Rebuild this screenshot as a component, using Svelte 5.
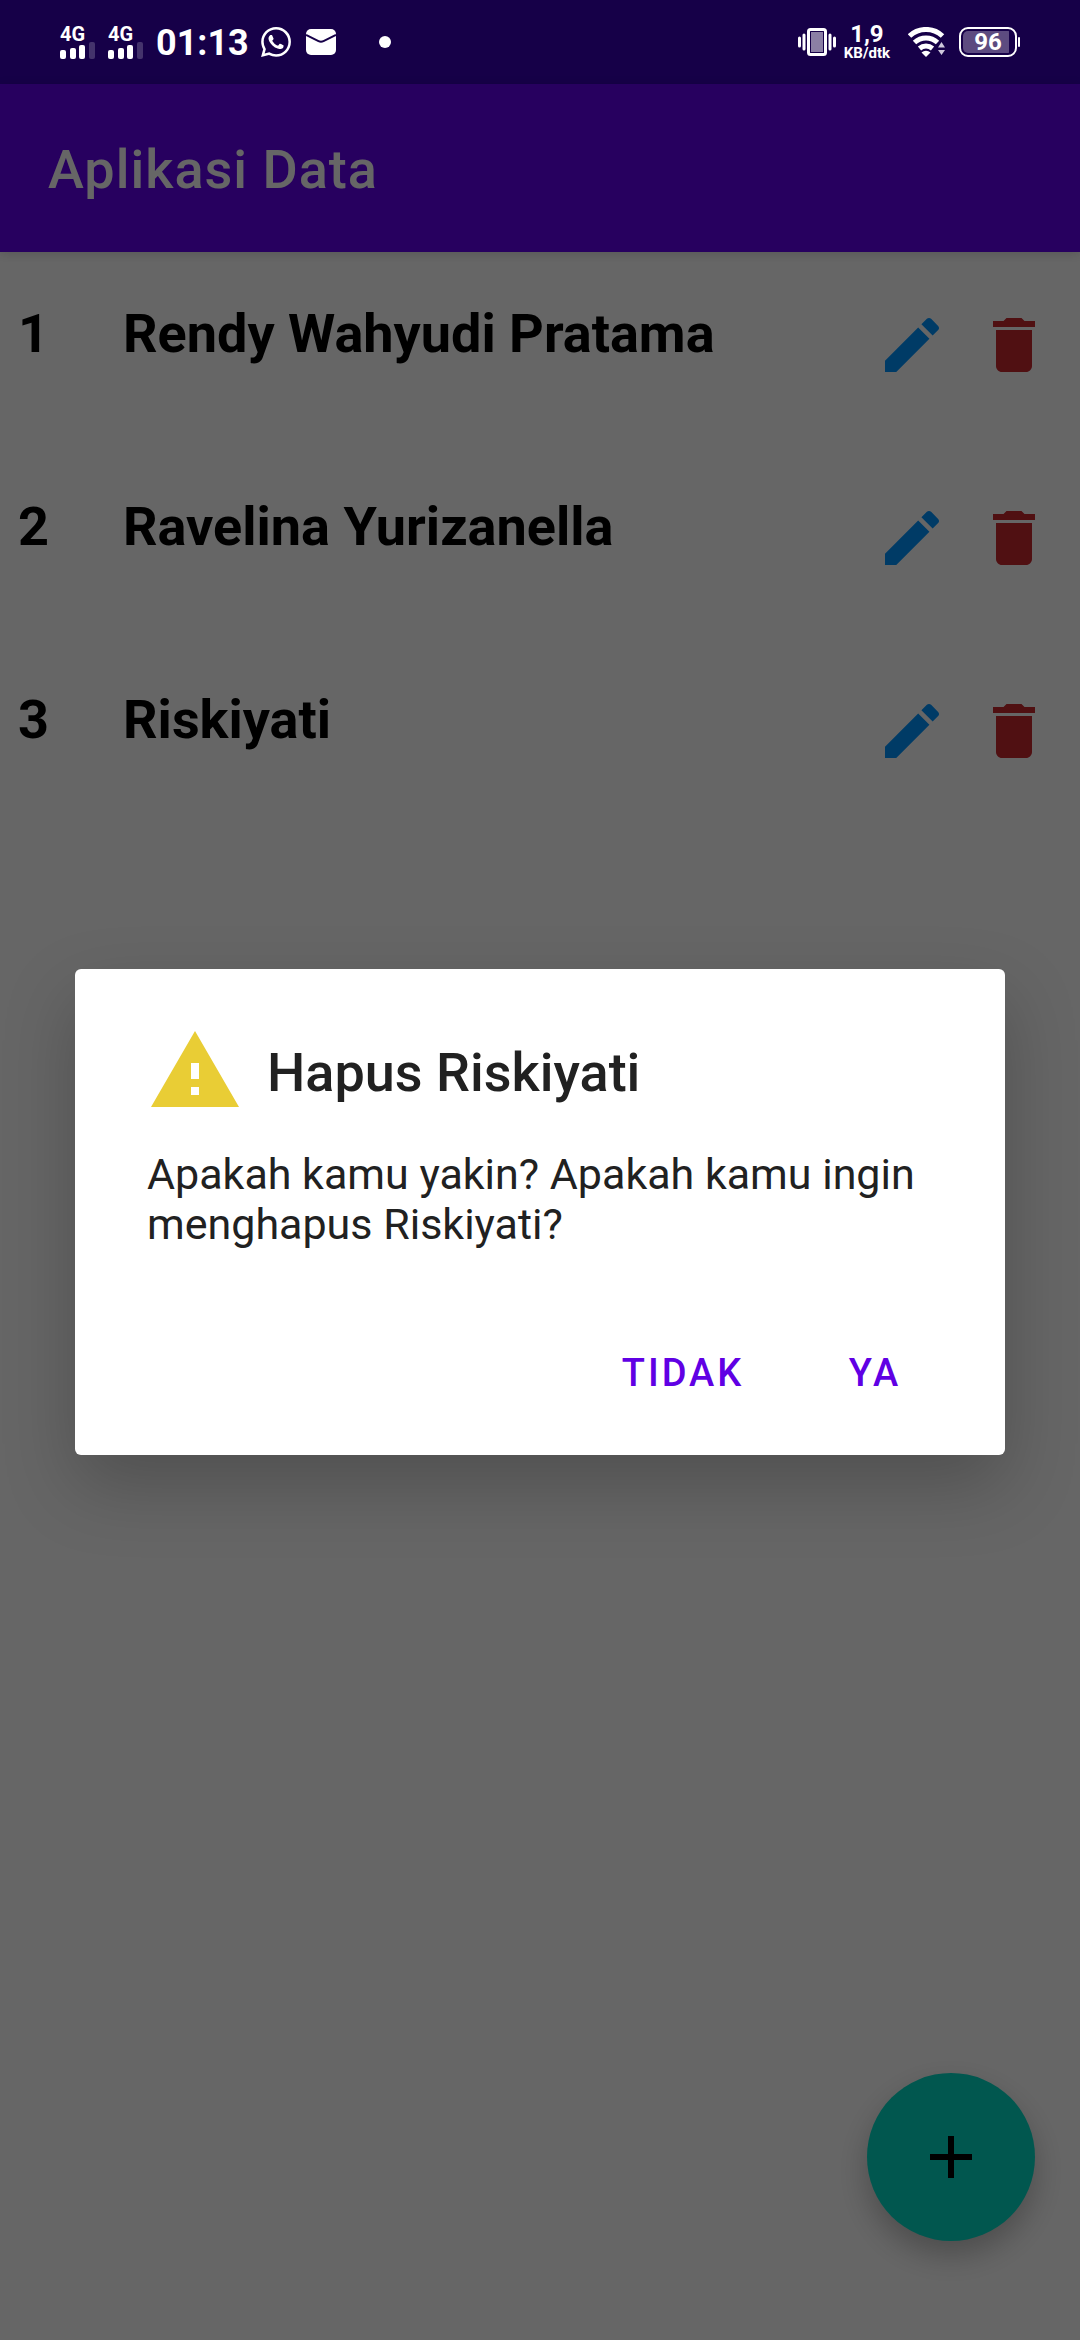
<script>
  let people = $state([
    { id: 1, name: 'Rendy Wahyudi Pratama' },
    { id: 2, name: 'Ravelina Yurizanella' },
    { id: 3, name: 'Riskiyati' }
  ]);
  let selected = $state({ id: 3, name: 'Riskiyati' });

  function askDelete(person) {
    selected = person;
  }

  function cancel() {
    selected = null;
  }

  function confirmDelete() {
    people = people.filter((p) => p.id !== selected.id);
    selected = null;
  }
</script>

{#snippet signal()}
  <div class="signal">
    <span>4G</span>
    <svg width="36" height="17" viewBox="0 0 36 17" fill="#fff" aria-hidden="true">
      <rect x="0" y="8" width="6" height="9" rx="2" />
      <rect x="10" y="6" width="6" height="11" rx="2" />
      <rect x="19" y="3" width="6" height="14" rx="2" />
      <rect x="29" y="0" width="6" height="17" rx="2" opacity="0.2" />
    </svg>
  </div>
{/snippet}

<div class="screen">
  <div class="status">
    <div class="group left">
      {@render signal()}
      {@render signal()}
      <span class="clock">01:13</span>
      <svg class="whatsapp" width="30" height="30" viewBox="0 0 24 24" fill="#fff" aria-hidden="true">
        <path d="M17.472 14.382c-.297-.149-1.758-.867-2.03-.967-.273-.099-.471-.148-.67.15-.197.297-.767.966-.94 1.164-.173.199-.347.223-.644.075-.297-.15-1.255-.463-2.39-1.475-.883-.788-1.48-1.761-1.653-2.059-.173-.297-.018-.458.13-.606.134-.133.298-.347.446-.52.149-.174.198-.298.298-.497.099-.198.05-.371-.025-.52-.075-.149-.669-1.612-.916-2.207-.242-.579-.487-.5-.669-.51-.173-.008-.371-.01-.57-.01-.198 0-.52.074-.792.372-.272.297-1.04 1.016-1.04 2.479 0 1.462 1.065 2.875 1.213 3.074.149.198 2.096 3.2 5.077 4.487.709.306 1.262.489 1.694.625.712.227 1.36.195 1.871.118.571-.085 1.758-.719 2.006-1.413.248-.694.248-1.289.173-1.413-.074-.124-.272-.198-.57-.347m-5.421 7.403h-.004a9.87 9.87 0 01-5.031-1.378l-.361-.214-3.741.982.998-3.648-.235-.374a9.86 9.86 0 01-1.51-5.26c.001-5.45 4.436-9.884 9.888-9.884 2.64 0 5.122 1.03 6.988 2.898a9.825 9.825 0 012.893 6.994c-.003 5.45-4.437 9.884-9.885 9.884m8.413-18.297A11.815 11.815 0 0012.05 0C5.495 0 .16 5.335.157 11.892c0 2.096.547 4.142 1.588 5.945L.057 24l6.305-1.654a11.882 11.882 0 005.683 1.448h.005c6.554 0 11.89-5.335 11.893-11.893a11.821 11.821 0 00-3.48-8.413z" />
      </svg>
      <svg class="mail" width="30" height="26" viewBox="0 0 30 26" aria-hidden="true">
        <rect width="30" height="26" rx="5" fill="#fff" />
        <path d="M0 6l12.500 6.200q2.500 1.200 5 0L30 6" fill="none" stroke="#160048" stroke-width="2" />
      </svg>
      <span class="dot"></span>
    </div>
    <div class="group right">
      <svg width="38" height="30" viewBox="0 0 38 30" aria-hidden="true">
        <rect x="10.500" y="2.500" width="17" height="25" rx="2" fill="none" stroke="#fff" stroke-width="3" />
        <rect x="13" y="5" width="12" height="20" fill="#8b7fa4" />
        <path d="M1.500 11v8M6 8v14M32 8v14M36.500 11v8" stroke="#fff" stroke-width="3" stroke-linecap="round" />
      </svg>
      <div class="speed">
        <span class="rate">1,9</span>
        <span class="unit">KB/dtk</span>
      </div>
      <svg class="wifi" width="37" height="30" viewBox="0 0 37 30" aria-hidden="true">
        <g fill="none" stroke="#fff" stroke-width="5">
          <path d="M1.500 9a24 24 0 0 1 33 0" />
          <path d="M6.500 15.500a17 17 0 0 1 23 0" />
          <path d="M11.500 21.500a10 10 0 0 1 13 0" />
        </g>
        <path d="M13.500 25.500a7 7 0 0 1 9 0L18 30z" fill="#fff" />
        <path d="M33 12.500l5 7.500v3l-5 7-6-7v-3z" fill="#160048" />
        <path d="M33.500 15l3.500 5.500h-7zM33.500 28l3.500-5h-7z" fill="#cfc8dc" />
      </svg>
      <div class="battery">
        <div class="cell"><span>96</span></div>
        <i></i>
      </div>
    </div>
  </div>

  <header>
    <h1>Aplikasi Data</h1>
  </header>

  <main>
    <ul>
      {#each people as person (person.id)}
        <li>
          <span class="number">{person.id}</span>
          <span class="name">{person.name}</span>
          <div class="actions">
            <button class="icon edit" aria-label="Ubah {person.name}">
              <svg viewBox="0 0 24 24" fill="currentColor" aria-hidden="true">
                <path d="M3 17.250V21h3.750L17.810 9.940l-3.750-3.750L3 17.250zM20.710 7.040c.390-.390.390-1.020 0-1.410l-2.340-2.340c-.390-.390-1.020-.390-1.410 0l-1.830 1.830 3.750 3.750 1.830-1.830z" />
              </svg>
            </button>
            <button class="icon remove" aria-label="Hapus {person.name}" onclick={() => askDelete(person)}>
              <svg viewBox="0 0 24 24" fill="currentColor" aria-hidden="true">
                <path d="M6 19c0 1.100.900 2 2 2h8c1.100 0 2-.900 2-2V7H6v12zM19 4h-3.500l-1-1h-5l-1 1H5v2h14V4z" />
              </svg>
            </button>
          </div>
        </li>
      {/each}
    </ul>
  </main>

  <button class="fab" aria-label="Tambah data">
    <svg viewBox="0 0 24 24" fill="#000" aria-hidden="true">
      <path d="M19 13h-6v6h-2v-6H5v-2h6V5h2v6h6v2z" />
    </svg>
  </button>

  {#if selected}
    <div class="scrim">
      <div class="dialog" role="alertdialog" aria-modal="true" aria-labelledby="dialog-title" aria-describedby="dialog-text">
        <div class="heading">
          <svg viewBox="0 0 24 24" fill="#e9cd35" aria-hidden="true">
            <path d="M1 21h22L12 2 1 21zm12-3h-2v-2h2v2zm0-4h-2v-4h2v4z" />
          </svg>
          <h2 id="dialog-title">Hapus {selected.name}</h2>
        </div>
        <p id="dialog-text">Apakah kamu yakin? Apakah kamu ingin menghapus {selected.name}?</p>
        <div class="choices">
          <button onclick={cancel}>TIDAK</button>
          <button onclick={confirmDelete}>YA</button>
        </div>
      </div>
    </div>
  {/if}
</div>

<style>
  :global(body) {
    margin: 0;
    background: #fff;
  }

  .screen {
    position: relative;
    min-height: 100vh;
    background: #fff;
    color: #000;
    font-family: Roboto, 'Noto Sans', sans-serif;
  }

  button {
    padding: 0;
    border: 0;
    background: none;
    font: inherit;
    cursor: pointer;
  }

  svg {
    display: block;
    flex: none;
  }

  /* Status bar */
  .status {
    display: flex;
    justify-content: space-between;
    align-items: center;
    box-sizing: border-box;
    height: 84px;
    padding: 0 60px;
    background: #160048;
    color: #fff;
    font-weight: 700;
  }

  .group {
    display: flex;
    align-items: center;
  }

  .signal {
    display: flex;
    flex-direction: column;
    width: 36px;
    margin-right: 12px;
    font-size: 20px;
    line-height: 16px;
  }

  .clock {
    margin-right: 12px;
    padding-top: 2px;
    font-size: 36px;
    line-height: 42px;
  }

  .mail {
    margin-left: 15px;
  }

  .dot {
    width: 12px;
    height: 12px;
    margin-left: 43px;
    border-radius: 50%;
    background: #fff;
  }

  .speed {
    display: flex;
    flex-direction: column;
    align-items: center;
    margin: 0 18px 0 8px;
  }

  .rate {
    font-size: 24px;
    line-height: 22px;
  }

  .unit {
    font-size: 15px;
    line-height: 16px;
  }

  .battery {
    display: flex;
    align-items: center;
    gap: 1px;
    margin-left: 14px;
  }

  .cell {
    box-sizing: border-box;
    width: 58px;
    height: 30px;
    padding: 2px;
    border: 2px solid #fff;
    border-radius: 9px;
    background: linear-gradient(90deg, #5d4b80 92%, #160048 92%) content-box;
    font-size: 24px;
    line-height: 23px;
    text-align: center;
  }

  .battery i {
    width: 2px;
    height: 10px;
    border-radius: 1px;
    background: #fff;
  }

  /* App bar */
  header {
    position: relative;
    display: flex;
    align-items: center;
    box-sizing: border-box;
    height: 168px;
    padding: 4px 48px 0;
    background: #6200ee;
    box-shadow: 0 2px 10px rgba(0, 0, 0, 0.15);
  }

  h1 {
    margin: 0;
    color: #fff;
    font-size: 54px;
    font-weight: 500;
    line-height: 64px;
    letter-spacing: 1px;
  }

  /* List */
  ul {
    margin: 0;
    padding: 0;
    list-style: none;
  }

  li {
    display: flex;
    align-items: flex-start;
    box-sizing: border-box;
    min-height: 193px;
    padding: 50px 30px 0 18px;
    font-size: 54px;
    font-weight: 700;
    line-height: 64px;
  }

  .number {
    flex: none;
    width: 105px;
  }

  .name {
    flex: 1;
  }

  .actions {
    display: flex;
    gap: 30px;
    padding-top: 7px;
  }

  .icon,
  .icon svg {
    display: block;
    width: 72px;
    height: 72px;
  }

  .edit {
    color: #0094ff;
  }

  .remove {
    color: #c8282f;
  }

  .fab {
    position: absolute;
    right: 45px;
    bottom: 99px;
    display: flex;
    align-items: center;
    justify-content: center;
    width: 168px;
    height: 168px;
    border-radius: 50%;
    background: #03dac5;
    box-shadow: 0 14px 30px rgba(0, 0, 0, 0.25);
  }

  .fab svg {
    width: 72px;
    height: 72px;
  }

  /* Confirmation dialog */
  .scrim {
    position: absolute;
    inset: 84px 0 0;
    display: flex;
    align-items: center;
    justify-content: center;
    padding: 0 75px;
    background: rgba(0, 0, 0, 0.6);
  }

  .dialog {
    box-sizing: border-box;
    width: 100%;
    padding: 54px 34px 28px 72px;
    border-radius: 6px;
    background: #fff;
    color: #212121;
    box-shadow: 0 30px 72px rgba(0, 0, 0, 0.22);
  }

  .heading {
    display: flex;
    align-items: center;
    gap: 24px;
  }

  .heading svg {
    width: 96px;
    height: 96px;
  }

  h2 {
    margin: 0;
    padding-top: 4px;
    font-size: 54px;
    font-weight: 500;
    line-height: 64px;
  }

  p {
    margin: 30px 0 70px;
    padding-right: 38px;
    font-size: 43px;
    line-height: 50px;
  }

  .choices {
    display: flex;
    justify-content: flex-end;
  }

  .choices button {
    min-width: 192px;
    height: 108px;
    padding: 0 24px;
    color: #6000e4;
    font-size: 38px;
    font-weight: 500;
    letter-spacing: 3px;
  }
</style>
